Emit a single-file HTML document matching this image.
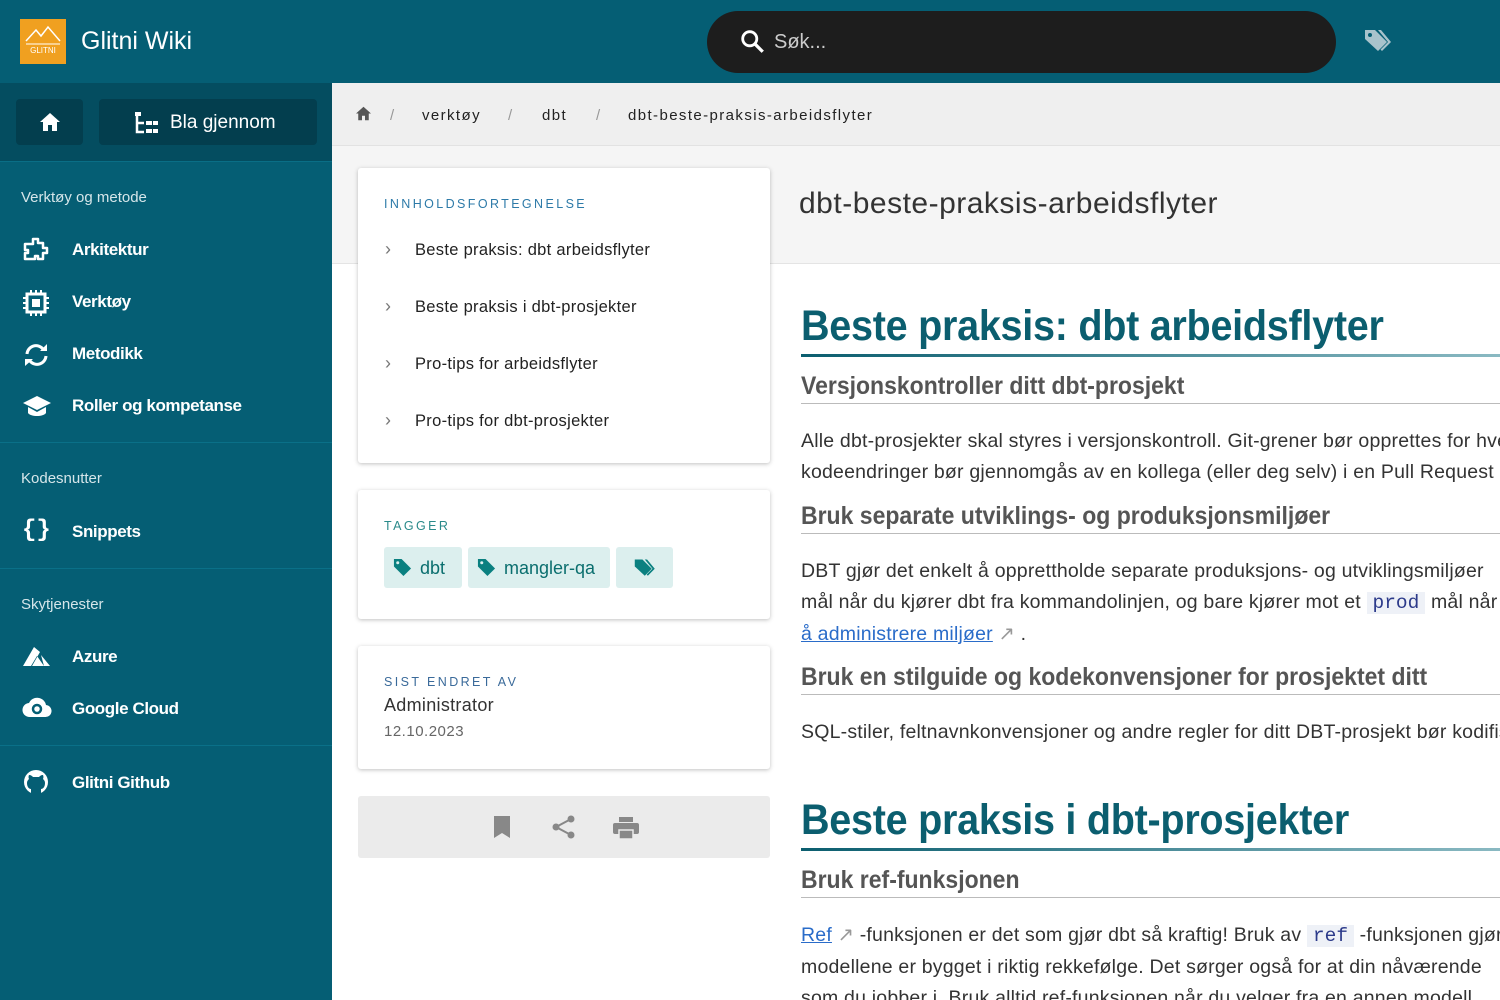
<!DOCTYPE html>
<html><head><meta charset="utf-8"><style>
*{box-sizing:border-box;margin:0;padding:0}
html,body{width:1500px;height:1000px;overflow:hidden}
body{font-family:"Liberation Sans",sans-serif;background:#fff;position:relative}
.top{position:absolute;left:0;top:0;width:1500px;height:83px;background:#055e74}
.logo{position:absolute;left:20px;top:19px;width:46px;height:45px;background:#f0a020}
.title{position:absolute;left:81px;top:27px;color:#fff;font-size:25px}
.search{position:absolute;left:707px;top:11px;width:629px;height:62px;border-radius:31px;background:#1d1d1d;color:#ccc;font-size:20px;padding:20px 0 0 67px}
.side{position:absolute;left:0;top:83px;width:332px;height:917px;background:#055e74;color:#fff}
.btnrow{height:79px;background:#044d60;border-bottom:1px solid #0a6e86;position:relative}
.b1{position:absolute;left:16px;top:16px;width:67px;height:46px;background:#033e4e;border-radius:4px}
.b2{position:absolute;left:99px;top:16px;width:218px;height:46px;background:#033e4e;border-radius:4px;font-size:19px;padding:13px 0 0 71px}
.sec{color:#d6e6ea;font-size:15px;position:absolute;left:21px}
.it{position:absolute;left:72px;font-size:17px;font-weight:bold;letter-spacing:-.4px}
.ic{position:absolute;left:22px}
.hr{position:absolute;left:0;width:332px;height:1px;background:#0a7088}
.crumb{position:absolute;left:332px;top:83px;width:1168px;height:63px;background:#efefef;border-bottom:1px solid #e2e2e2;font-size:15px;color:#222;letter-spacing:1.4px}
.crumb span{position:absolute;top:24px}
.phead{position:absolute;left:332px;top:146px;width:1168px;height:118px;background:#f5f5f5;border-bottom:1px solid #e4e4e4}
.ptitle{position:absolute;left:799px;top:187px;font-size:30px;color:#333;letter-spacing:.5px}
.card{position:absolute;left:358px;width:412px;background:#fff;box-shadow:0 1px 4px rgba(0,0,0,.25);border-radius:3px}
.lab{position:absolute;left:26px;font-size:12.5px;letter-spacing:2.4px;color:#2d7aa8}
.toc{position:absolute;left:57px;font-size:16.5px;color:#222;letter-spacing:.3px}
.chev{position:absolute;left:27px;color:#777;font-size:18px}
.tag{position:absolute;top:57px;height:41px;background:#dcefee;border-radius:3px;color:#0a6e6e;font-size:18px;padding:11px 0 0 36px}
.clip{position:absolute;left:801px;top:264px;width:699px;height:736px;overflow:hidden}
.main{position:absolute;left:0;width:760px;white-space:nowrap;overflow:hidden}
.h1{font-weight:bold;color:#0b5e6f;font-size:43px;transform:scaleX(.92);transform-origin:0 0;letter-spacing:-.3px}
.h1line{position:absolute;left:0;width:699px;height:3px;background:linear-gradient(90deg,#0b5e6f,#8ab9c2)}
.h2{font-weight:bold;color:#555;font-size:25px;transform:scaleX(.92);transform-origin:0 0}
.h2line{position:absolute;left:0;width:699px;height:1px;background:#bbb}
.p{font-size:19.5px;color:#333;line-height:31px;letter-spacing:.2px;width:699px}
code{font-family:"Liberation Mono",monospace;color:#2c3a8a;background:#eef1f7;padding:0 6px;letter-spacing:0}
a{color:#2a6cc9}
</style></head><body>
<div class="top">
<div class="logo"><svg width="46" height="45"><path d="M6 22 L16 11 L21 17 L28 8 L40 22" stroke="#fff" fill="none" stroke-width="1.5"/><path d="M6 25h34" stroke="#fff"/><text x="23" y="34" fill="#fff" font-size="8" text-anchor="middle" font-family="Liberation Sans">GLITNI</text></svg></div>
<div class="title">Glitni Wiki</div>
<div class="search"><svg style="position:absolute;left:33px;top:18px" width="26" height="26" viewBox="0 0 24 24"><circle cx="9" cy="9" r="6.5" stroke="#fff" stroke-width="2.6" fill="none"/><path d="M14 14l7 7" stroke="#fff" stroke-width="3"/></svg>Søk...</div>
<svg style="position:absolute;left:1363px;top:28px" width="28" height="26" viewBox="0 0 28 26"><path d="M2 2h10l12 12-9 9L2 11z" fill="#a9c3cc"/><path d="M15 2h3l10 12-9 9-1.5-1.5 7.5-7.5z" fill="#a9c3cc"/><circle cx="7" cy="7" r="2" fill="#055e74"/></svg>
</div>
<div class="side">
<div class="btnrow"><div class="b1"><svg style="position:absolute;left:23px;top:13px" width="22" height="20" viewBox="0 0 22 20"><path d="M11 1L1 10h3v9h5v-6h4v6h5v-9h3z" fill="#fff"/></svg></div>
<div class="b2"><svg style="position:absolute;left:35px;top:12px" width="26" height="24" viewBox="0 0 26 24"><rect x="1" y="1" width="6" height="4" fill="#fff"/><path d="M3 5v16h7M3 12h7" stroke="#fff" stroke-width="2.5" fill="none"/><rect x="12" y="10" width="6" height="4" fill="#fff"/><rect x="12" y="18" width="6" height="4" fill="#fff"/><rect x="19" y="10" width="5" height="4" fill="#fff"/><rect x="19" y="18" width="5" height="4" fill="#fff"/></svg>Bla gjennom</div></div>
<div class="sec" style="top:106px">Verktøy og metode</div>
<svg class="ic" style="top:153px" width="28" height="28" viewBox="0 0 28 28"><path d="M11 3h5v4h5v5h4v5h-4v6h-5v-3h-3v3H3v-6h3v-3H3V8h8z" stroke="#fff" stroke-width="2.5" fill="none" stroke-linejoin="round"/></svg><div class="it" style="top:157px">Arkitektur</div>
<svg class="ic" style="top:206px" width="28" height="28" viewBox="0 0 28 28"><rect x="5" y="5" width="18" height="18" stroke="#fff" stroke-width="3" fill="none"/><rect x="10" y="10" width="8" height="8" fill="#fff"/><path d="M9 1v4M14 1v4M19 1v4M9 23v4M14 23v4M19 23v4M1 9h4M1 14h4M1 19h4M23 9h4M23 14h4M23 19h4" stroke="#fff" stroke-width="2"/></svg><div class="it" style="top:209px">Verktøy</div>
<svg class="ic" style="top:258px" width="30" height="28" viewBox="0 0 30 28"><path d="M5 13a9 9 0 0 1 16-5M24 15a9 9 0 0 1-16 5" stroke="#fff" stroke-width="3" fill="none"/><path d="M18 10h7V3zM11 18H3v7z" fill="#fff"/></svg><div class="it" style="top:261px">Metodikk</div>
<svg class="ic" style="top:311px" width="30" height="26" viewBox="0 0 30 26"><path d="M15 2L1 9l14 7 14-7z" fill="#fff"/><path d="M6 13v6c3 4 15 4 18 0v-6l-9 5z" fill="#fff"/></svg><div class="it" style="top:313px">Roller og kompetanse</div>
<div class="hr" style="top:359px"></div>
<div class="sec" style="top:387px">Kodesnutter</div>
<div class="ic" style="top:434px;font-size:24px;font-weight:bold;font-family:'Liberation Mono',monospace">{}</div><div class="it" style="top:439px">Snippets</div>
<div class="hr" style="top:485px"></div>
<div class="sec" style="top:513px">Skytjenester</div>
<svg class="ic" style="top:563px" width="30" height="22" viewBox="0 0 30 22"><path d="M12 1L1 20h9l8-14zM15 10l7 10H9z" fill="#fff"/><path d="M19 9l9 11h-6z" fill="#fff"/></svg><div class="it" style="top:564px">Azure</div>
<svg class="ic" style="top:612px" width="30" height="24" viewBox="0 0 30 24"><path d="M8 22a7 7 0 0 1-1-14 9 9 0 0 1 17 2 6 6 0 0 1-1 12z" fill="#fff"/><circle cx="15" cy="14" r="4" stroke="#055e74" stroke-width="2.5" fill="none"/></svg><div class="it" style="top:616px">Google Cloud</div>
<div class="hr" style="top:662px"></div>
<svg class="ic" style="top:685px" width="28" height="28" viewBox="0 0 28 28"><circle cx="14" cy="14" r="12" fill="#fff"/><path d="M9 26v-5c-2 0-4-2-4-6 0-2 1-3 2-4-1-2 0-4 0-4 2 0 3 1 4 2h6c1-1 2-2 4-2 0 0 1 2 0 4 1 1 2 2 2 4 0 4-2 6-4 6v5z" fill="#055e74"/></svg><div class="it" style="top:690px">Glitni Github</div>
</div>
<div class="crumb"><svg style="position:absolute;left:23px;top:23px" width="17" height="15" viewBox="0 0 22 20"><path d="M11 1L1 10h3v9h5v-6h4v6h5v-9h3z" fill="#555"/></svg><span style="left:58px;color:#999">/</span><span style="left:90px">verktøy</span><span style="left:176px;color:#999">/</span><span style="left:210px">dbt</span><span style="left:264px;color:#999">/</span><span style="left:296px">dbt-beste-praksis-arbeidsflyter</span></div>
<div class="phead"></div>
<div class="ptitle">dbt-beste-praksis-arbeidsflyter</div>
<div class="card" style="top:168px;height:295px">
<div class="lab" style="top:29px">INNHOLDSFORTEGNELSE</div>
<div class="chev" style="top:71px">›</div><div class="toc" style="top:73px">Beste praksis: dbt arbeidsflyter</div>
<div class="chev" style="top:128px">›</div><div class="toc" style="top:130px">Beste praksis i dbt-prosjekter</div>
<div class="chev" style="top:185px">›</div><div class="toc" style="top:187px">Pro-tips for arbeidsflyter</div>
<div class="chev" style="top:242px">›</div><div class="toc" style="top:244px">Pro-tips for dbt-prosjekter</div>
</div>
<div class="card" style="top:490px;height:129px">
<div class="lab" style="top:29px;color:#2a8a8a">TAGGER</div>
<div class="tag" style="left:26px;width:78px">dbt</div>
<div class="tag" style="left:110px;width:142px">mangler-qa</div>
<div class="tag" style="left:258px;width:57px"></div>
<svg style="position:absolute;left:35px;top:68px" width="19" height="19" viewBox="0 0 20 20"><path d="M1 1h8l10 10-8 8L1 9z" fill="#0a8080"/><circle cx="5" cy="5" r="1.6" fill="#dcefee"/></svg>
<svg style="position:absolute;left:119px;top:68px" width="19" height="19" viewBox="0 0 20 20"><path d="M1 1h8l10 10-8 8L1 9z" fill="#0a8080"/><circle cx="5" cy="5" r="1.6" fill="#dcefee"/></svg>
<svg style="position:absolute;left:274px;top:68px" width="24" height="20" viewBox="0 0 28 26"><path d="M2 2h10l12 12-9 9L2 11z" fill="#0a8080"/><path d="M15 2h3l10 12-9 9-1.5-1.5 7.5-7.5z" fill="#0a8080"/></svg>
</div>
<div class="card" style="top:646px;height:123px">
<div class="lab" style="top:29px;color:#3a6a9a">SIST ENDRET AV</div>
<div style="position:absolute;left:26px;top:49px;font-size:18px;color:#333;letter-spacing:.3px">Administrator</div>
<div style="position:absolute;left:26px;top:77px;font-size:15px;color:#666;letter-spacing:.5px">12.10.2023</div>
</div>
<div style="position:absolute;left:358px;top:796px;width:412px;height:62px;background:#ebebeb;border-radius:3px">
<svg style="position:absolute;left:134px;top:19px" width="20" height="24" viewBox="0 0 20 24"><path d="M2 1h16v22l-8-5-8 5z" fill="#888"/></svg>
<svg style="position:absolute;left:193px;top:18px" width="26" height="26" viewBox="0 0 26 26"><circle cx="20" cy="5" r="3.5" fill="#888"/><circle cx="5" cy="13" r="3.5" fill="#888"/><circle cx="20" cy="21" r="3.5" fill="#888"/><path d="M20 5L5 13l15 8" stroke="#888" stroke-width="2" fill="none"/></svg>
<svg style="position:absolute;left:254px;top:20px" width="28" height="24" viewBox="0 0 28 24"><rect x="7" y="1" width="14" height="5" fill="#888"/><rect x="1" y="7" width="26" height="11" rx="2" fill="#888"/><rect x="7" y="14" width="14" height="9" fill="#888" stroke="#ebebeb" stroke-width="1.5"/></svg>
</div>

<div class="clip">
<div class="main h1" style="top:38px">Beste praksis: dbt arbeidsflyter</div>
<div class="h1line" style="top:90px"></div>
<div class="main h2" style="top:108px">Versjonskontroller ditt dbt-prosjekt</div>
<div class="h2line" style="top:139px"></div>
<div class="main p" style="top:162px">Alle dbt-prosjekter skal styres i versjonskontroll. Git-grener bør opprettes for hver ny funksjon<br>kodeendringer bør gjennomgås av en kollega (eller deg selv) i en Pull Request</div>
<div class="main h2" style="top:238px">Bruk separate utviklings- og produksjonsmiljøer</div>
<div class="h2line" style="top:269px"></div>
<div class="main p" style="top:292px">DBT gjør det enkelt å opprettholde separate produksjons- og utviklingsmiljøer<br>mål når du kjører dbt fra kommandolinjen, og bare kjører mot et <code>prod</code> mål når<br><a href="#">å administrere miljøer</a> <span style="color:#999">↗</span> .</div>
<div class="main h2" style="top:399px">Bruk en stilguide og kodekonvensjoner for prosjektet ditt</div>
<div class="h2line" style="top:430px"></div>
<div class="main p" style="top:453px">SQL-stiler, feltnavnkonvensjoner og andre regler for ditt DBT-prosjekt bør kodifiseres</div>
<div class="main h1" style="top:532px">Beste praksis i dbt-prosjekter</div>
<div class="h1line" style="top:584px"></div>
<div class="main h2" style="top:602px">Bruk ref-funksjonen</div>
<div class="h2line" style="top:633px"></div>
<div class="main p" style="top:656px"><a href="#">Ref</a> <span style="color:#999">↗</span> -funksjonen er det som gjør dbt så kraftig! Bruk av <code>ref</code> -funksjonen gjør at<br>modellene er bygget i riktig rekkefølge. Det sørger også for at din nåværende<br>som du jobber i. Bruk alltid ref-funksjonen når du velger fra en annen modell</div>
</div>
</body></html>
